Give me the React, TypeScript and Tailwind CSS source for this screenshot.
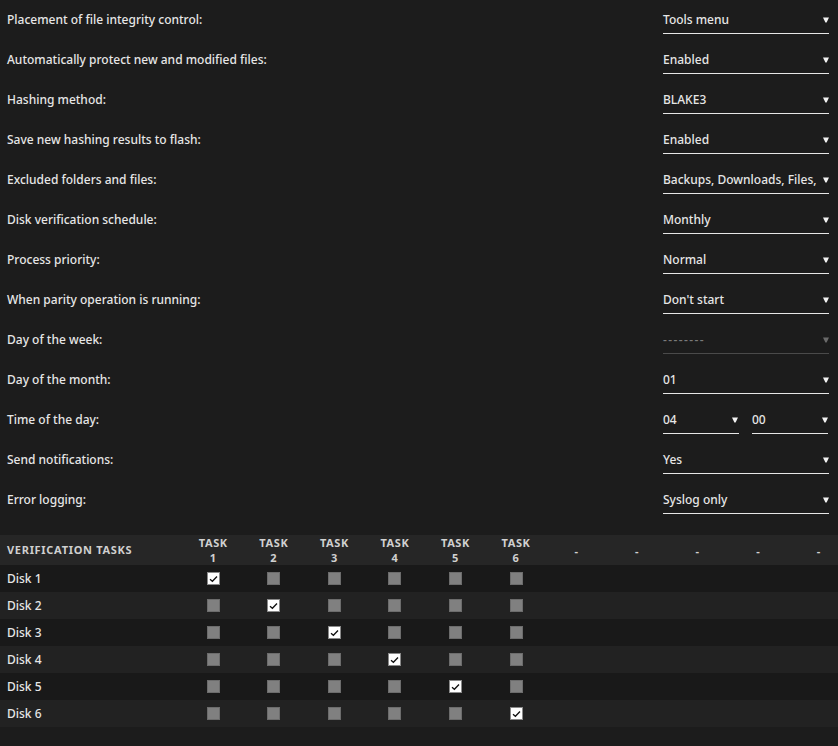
import { Fragment } from "react";

const settings = [
  { label: "Placement of file integrity control:", value: "Tools menu" },
  { label: "Automatically protect new and modified files:", value: "Enabled" },
  { label: "Hashing method:", value: "BLAKE3" },
  { label: "Save new hashing results to flash:", value: "Enabled" },
  { label: "Excluded folders and files:", value: "Backups, Downloads, Files," },
  { label: "Disk verification schedule:", value: "Monthly" },
  { label: "Process priority:", value: "Normal" },
  { label: "When parity operation is running:", value: "Don't start" },
  { label: "Day of the week:", value: "--------", disabled: true },
  { label: "Day of the month:", value: "01" },
  { label: "Time of the day:", value: "04", extra: "00" },
  { label: "Send notifications:", value: "Yes" },
  { label: "Error logging:", value: "Syslog only" },
];

const columns = ["1", "2", "3", "4", "5", "6", "-", "-", "-", "-", "-"];
const disks = ["Disk 1", "Disk 2", "Disk 3", "Disk 4", "Disk 5", "Disk 6"];

const Arrow = ({ dim }: { dim?: boolean }) => (
  <svg width="6" height="6" viewBox="0 0 6 6" className="shrink-0">
    <path d="M0 0.5H6L3.6 5.5H2.4Z" fill={dim ? "#6a6a6a" : "#f2f2f2"} />
  </svg>
);

const Select = ({ value, disabled, className }: { value: string; disabled?: boolean; className: string }) => (
  <div
    className={`flex h-[34px] items-center border-b pt-[7px] ${
      disabled ? "border-[#4a4a4a] text-[#7a7a7a]" : "border-[#e6e6e6] text-[#e6e6e6]"
    } ${className}`}
  >
    <span className={`flex-1 whitespace-nowrap ${disabled ? "tracking-[1.4px]" : ""}`}>{value}</span>
    <Arrow dim={disabled} />
  </div>
);

const Box = ({ checked }: { checked: boolean }) =>
  checked ? (
    <div className="flex h-[13px] w-[13px] items-center justify-center border border-[#8a8a8a] bg-white">
      <svg width="9" height="8" viewBox="0 0 9 8">
        <path d="M1 4.2L3.4 6.3L8 1.5" stroke="#111" strokeWidth="1.3" fill="none" />
      </svg>
    </div>
  ) : (
    <div className="h-[13px] w-[13px] border border-[#6c6c6c] bg-[#808080]" />
  );

export default function App() {
  return (
    <div
      className="min-h-[746px] w-[838px] overflow-hidden bg-[#1c1c1c] text-[12px] font-medium text-[#e6e6e6]"
      style={{ fontFamily: "'Noto Sans', 'Liberation Sans', sans-serif" }}
    >
      <div className="flex flex-col">
        {settings.map((s) => (
          <div key={s.label} className="flex h-10 items-start pl-[7px] pr-[9px]">
            <div className="flex-1 leading-[39px]">{s.label}</div>
            {s.extra ? (
              <div className="flex w-[166px] gap-[13px]">
                <Select value={s.value} className="w-[76px] pr-[1px]" />
                <Select value={s.extra} className="w-[76px]" />
              </div>
            ) : (
              <Select value={s.value} disabled={s.disabled} className="w-[166px]" />
            )}
          </div>
        ))}
      </div>

      <div className="mt-[15px] grid grid-cols-[183px_repeat(11,60.55px)]">
        <div className="flex h-[30px] items-center bg-[#262626] pl-[7px] text-[11px] font-bold tracking-[0.7px] text-[#d0d0d0]">
          VERIFICATION TASKS
        </div>
        {columns.map((c, i) => (
          <div
            key={i}
            className="flex h-[30px] flex-col items-center justify-center bg-[#262626] text-[11px] font-bold leading-[15px] tracking-[0.6px] text-[#d0d0d0]"
          >
            {c === "-" ? <span>-</span> : (
              <>
                <span>TASK</span>
                <span>{c}</span>
              </>
            )}
          </div>
        ))}
        {disks.map((d, r) => {
          const bg = r % 2 === 0 ? "bg-[#191919]" : "bg-[#222222]";
          return (
            <Fragment key={d}>
              <div className={`flex h-[27px] items-center pl-[7px] ${bg}`}>{d}</div>
              {columns.map((c, i) => (
                <div key={i} className={`flex h-[27px] items-center justify-center ${bg}`}>
                  {c !== "-" && <Box checked={i === r} />}
                </div>
              ))}
            </Fragment>
          );
        })}
      </div>
    </div>
  );
}
